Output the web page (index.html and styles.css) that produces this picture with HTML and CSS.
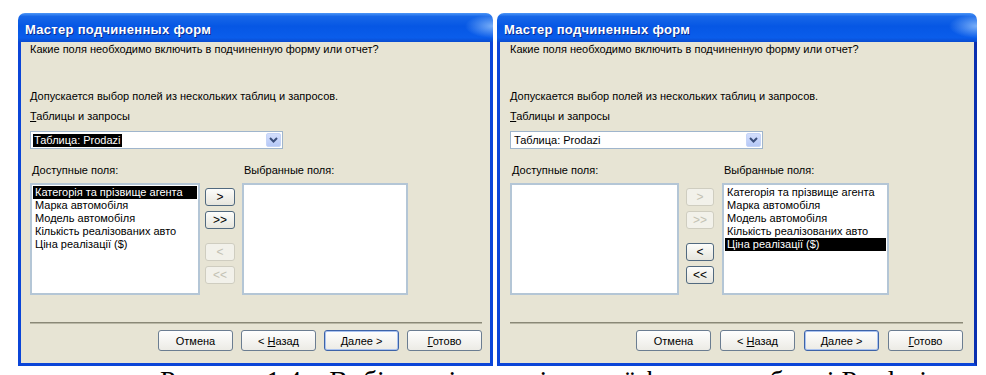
FILE: index.html
```html
<!DOCTYPE html>
<html lang="ru">
<head>
    <meta charset="UTF-8">
    <title>Мастер подчиненных форм</title>
    <link rel="stylesheet" href="styles.css">
</head>
<body>
    <div class="screens">
        <!-- Шаг 1: поля ещё не выбраны -->
        <div class="dialog dialog-left">
            <div class="titlebar">Мастер подчиненных форм</div>
            <div class="dialog-body">
                <p class="prompt">Какие поля необходимо включить в подчиненную форму или отчет?</p>
                <p class="note">Допускается выбор полей из нескольких таблиц и запросов.</p>
                <div class="field-label"><u>Т</u>аблицы и запросы</div>
                <div class="combo">
                    <span class="combo-value">Таблица: Prodazi</span>
                    <span class="combo-btn">
                        <svg width="9" height="6" viewBox="0 0 9 6"><path d="M1 1 L4.5 4.5 L8 1" fill="none" stroke="#3b4f7c" stroke-width="2"/></svg>
                    </span>
                </div>
                <div class="picker">
                    <div class="col col-avail">
                        <div class="col-label">Доступные поля:</div>
                        <ul class="listbox">
                            <li class="selected">Категорія та прізвище агента</li>
                            <li>Марка автомобіля</li>
                            <li>Модель автомобіля</li>
                            <li>Кількість реалізованих авто</li>
                            <li>Ціна реалізації ($)</li>
                        </ul>
                    </div>
                    <div class="movers">
                        <button class="mv">&gt;</button>
                        <button class="mv">&gt;&gt;</button>
                        <button class="mv mv-back" disabled>&lt;</button>
                        <button class="mv" disabled>&lt;&lt;</button>
                    </div>
                    <div class="col col-chosen">
                        <div class="col-label">Выбранные поля:</div>
                        <ul class="listbox"></ul>
                    </div>
                </div>
                <div class="separator"></div>
                <div class="actions">
                    <button class="btn">Отмена</button>
                    <button class="btn">&lt; <u>Н</u>азад</button>
                    <button class="btn btn-default"><u>Д</u>алее &gt;</button>
                    <button class="btn"><u>Г</u>отово</button>
                </div>
            </div>
        </div>

        <!-- Шаг 2: все поля перенесены -->
        <div class="dialog dialog-right">
            <div class="titlebar">Мастер подчиненных форм</div>
            <div class="dialog-body">
                <p class="prompt">Какие поля необходимо включить в подчиненную форму или отчет?</p>
                <p class="note">Допускается выбор полей из нескольких таблиц и запросов.</p>
                <div class="field-label"><u>Т</u>аблицы и запросы</div>
                <div class="combo">
                    <span class="combo-value plain">Таблица: Prodazi</span>
                    <span class="combo-btn">
                        <svg width="9" height="6" viewBox="0 0 9 6"><path d="M1 1 L4.5 4.5 L8 1" fill="none" stroke="#3b4f7c" stroke-width="2"/></svg>
                    </span>
                </div>
                <div class="picker">
                    <div class="col col-avail">
                        <div class="col-label">Доступные поля:</div>
                        <ul class="listbox"></ul>
                    </div>
                    <div class="movers">
                        <button class="mv" disabled>&gt;</button>
                        <button class="mv" disabled>&gt;&gt;</button>
                        <button class="mv mv-back">&lt;</button>
                        <button class="mv">&lt;&lt;</button>
                    </div>
                    <div class="col col-chosen">
                        <div class="col-label">Выбранные поля:</div>
                        <ul class="listbox">
                            <li>Категорія та прізвище агента</li>
                            <li>Марка автомобіля</li>
                            <li>Модель автомобіля</li>
                            <li>Кількість реалізованих авто</li>
                            <li class="selected">Ціна реалізації ($)</li>
                        </ul>
                    </div>
                </div>
                <div class="separator"></div>
                <div class="actions">
                    <button class="btn">Отмена</button>
                    <button class="btn">&lt; <u>Н</u>азад</button>
                    <button class="btn btn-default"><u>Д</u>алее &gt;</button>
                    <button class="btn"><u>Г</u>отово</button>
                </div>
            </div>
        </div>
    </div>

    <p class="caption">Рисунок 1.4 – Вибір полів для підлеглої форми з таблиці Prodazi</p>
</body>
</html>
```

FILE: styles.css
```css
body {
    margin: 0;
    height: 375px;
    overflow: hidden;
    background: #fff;
    color: #000;
    font-family: "Liberation Sans", Arial, sans-serif;
    font-size: 11px;
}

.screens {
    display: flex;
    gap: 4px;
    padding: 13px 0 0 18px;
}

.dialog {
    display: flex;
    flex-direction: column;
}

.dialog-left {
    width: 475px;
}

.dialog-right {
    width: 480px;
}

.titlebar {
    box-sizing: border-box;
    height: 29px;
    padding: 4px 0 0 7px;
    line-height: 25px;
    border-radius: 7px 7px 0 0;
    background:
        radial-gradient(ellipse 28px 12px at 100% 45%, rgba(160, 205, 255, 0.75), rgba(160, 205, 255, 0) 100%),
        linear-gradient(#4e97f7 0%, #1767e8 12%, #0657e4 45%, #0a5deb 85%, #0a4cd0 100%);
    color: #fff;
    font-size: 13px;
    font-weight: bold;
    letter-spacing: 0.3px;
    text-shadow: 1px 1px 0 #0c2c8e;
}

.dialog-body {
    flex: 1;
    background: #e7e4d4;
    border: 3px solid #0b45d8;
    border-top: 0;
    padding: 1px 8px 12px 9px;
}

.dialog-right .dialog-body {
    border-right-color: #0a2fb0;
    padding: 1px 11px 12px 10px;
}

.prompt,
.note,
.caption {
    margin: 0;
}

.prompt,
.note,
.field-label,
.col-label {
    line-height: 13px;
}

.note {
    margin-top: 34px;
}

.field-label {
    margin-top: 7px;
}

.combo {
    display: flex;
    align-items: center;
    justify-content: space-between;
    box-sizing: border-box;
    width: 253px;
    height: 18px;
    margin-top: 8px;
    padding: 0 1px 0 2px;
    background: #fff;
    border: 1px solid #9fb5cc;
}

.combo-value {
    background: #000;
    color: #fff;
    line-height: 13px;
    padding: 0 1px;
}

.combo-value.plain {
    background: none;
    color: #000;
}

.combo-btn {
    display: flex;
    align-items: center;
    justify-content: center;
    width: 15px;
    height: 14px;
    border-radius: 2px;
    background: linear-gradient(#d3defc, #b6c9f7);
    border: 1px solid #c5d4f7;
    box-sizing: border-box;
}

.picker {
    display: flex;
    margin-top: 15px;
}

.col-label {
    padding-left: 2px;
}

.listbox {
    box-sizing: border-box;
    height: 112px;
    margin: 6px 0 0;
    padding: 1px;
    list-style: none;
    background: #fff;
    border: 2px solid #b4c6d6;
}

.listbox li {
    line-height: 13px;
    padding: 0 2px;
    white-space: nowrap;
}

.listbox li.selected {
    background: #000;
    color: #fff;
}

.dialog-left .col-avail { width: 170px; }
.dialog-left .col-chosen { width: 166px; }
.dialog-left .movers { width: 30px; margin: 0 7px 0 5px; }

.dialog-right .col-avail { width: 169px; }
.dialog-right .col-chosen { width: 167px; }
.dialog-right .movers { width: 28px; margin: 0 8px 0 7px; }

.movers {
    display: flex;
    flex-direction: column;
    gap: 5px;
    padding-top: 24px;
}

.mv {
    height: 18px;
    padding: 0;
    font-family: "Liberation Sans", Arial, sans-serif;
    font-size: 12px;
    color: #000;
    background: linear-gradient(#fdfdfb, #e6e5dd);
    border: 1px solid #51697f;
    border-radius: 3px;
}

.mv:disabled {
    color: #c3c1b3;
    background: #f2f1ea;
    border-color: #cfcdc0;
}

.mv-back {
    margin-top: 9px;
}

.separator {
    margin-top: 27px;
    border-top: 1px solid #8a8877;
    border-bottom: 1px solid #b9b7a5;
}

.actions {
    display: flex;
    justify-content: flex-end;
    gap: 8px;
    margin-top: 6px;
}

.dialog-right .actions {
    gap: 9px;
}

.btn {
    width: 75px;
    height: 21px;
    padding: 0;
    font-family: "Liberation Sans", Arial, sans-serif;
    font-size: 11px;
    color: #000;
    background: linear-gradient(#fefefe, #ecebe5);
    border: 1px solid #6b7d91;
    border-radius: 3px;
}

.btn-default {
    border-color: #3d63a8;
    box-shadow: inset 0 0 0 1px #a9c2ef;
}

.caption {
    padding-left: 160px;
    font-family: "Liberation Serif", "Times New Roman", serif;
    font-size: 28px;
    line-height: 30px;
    white-space: nowrap;
}
```
